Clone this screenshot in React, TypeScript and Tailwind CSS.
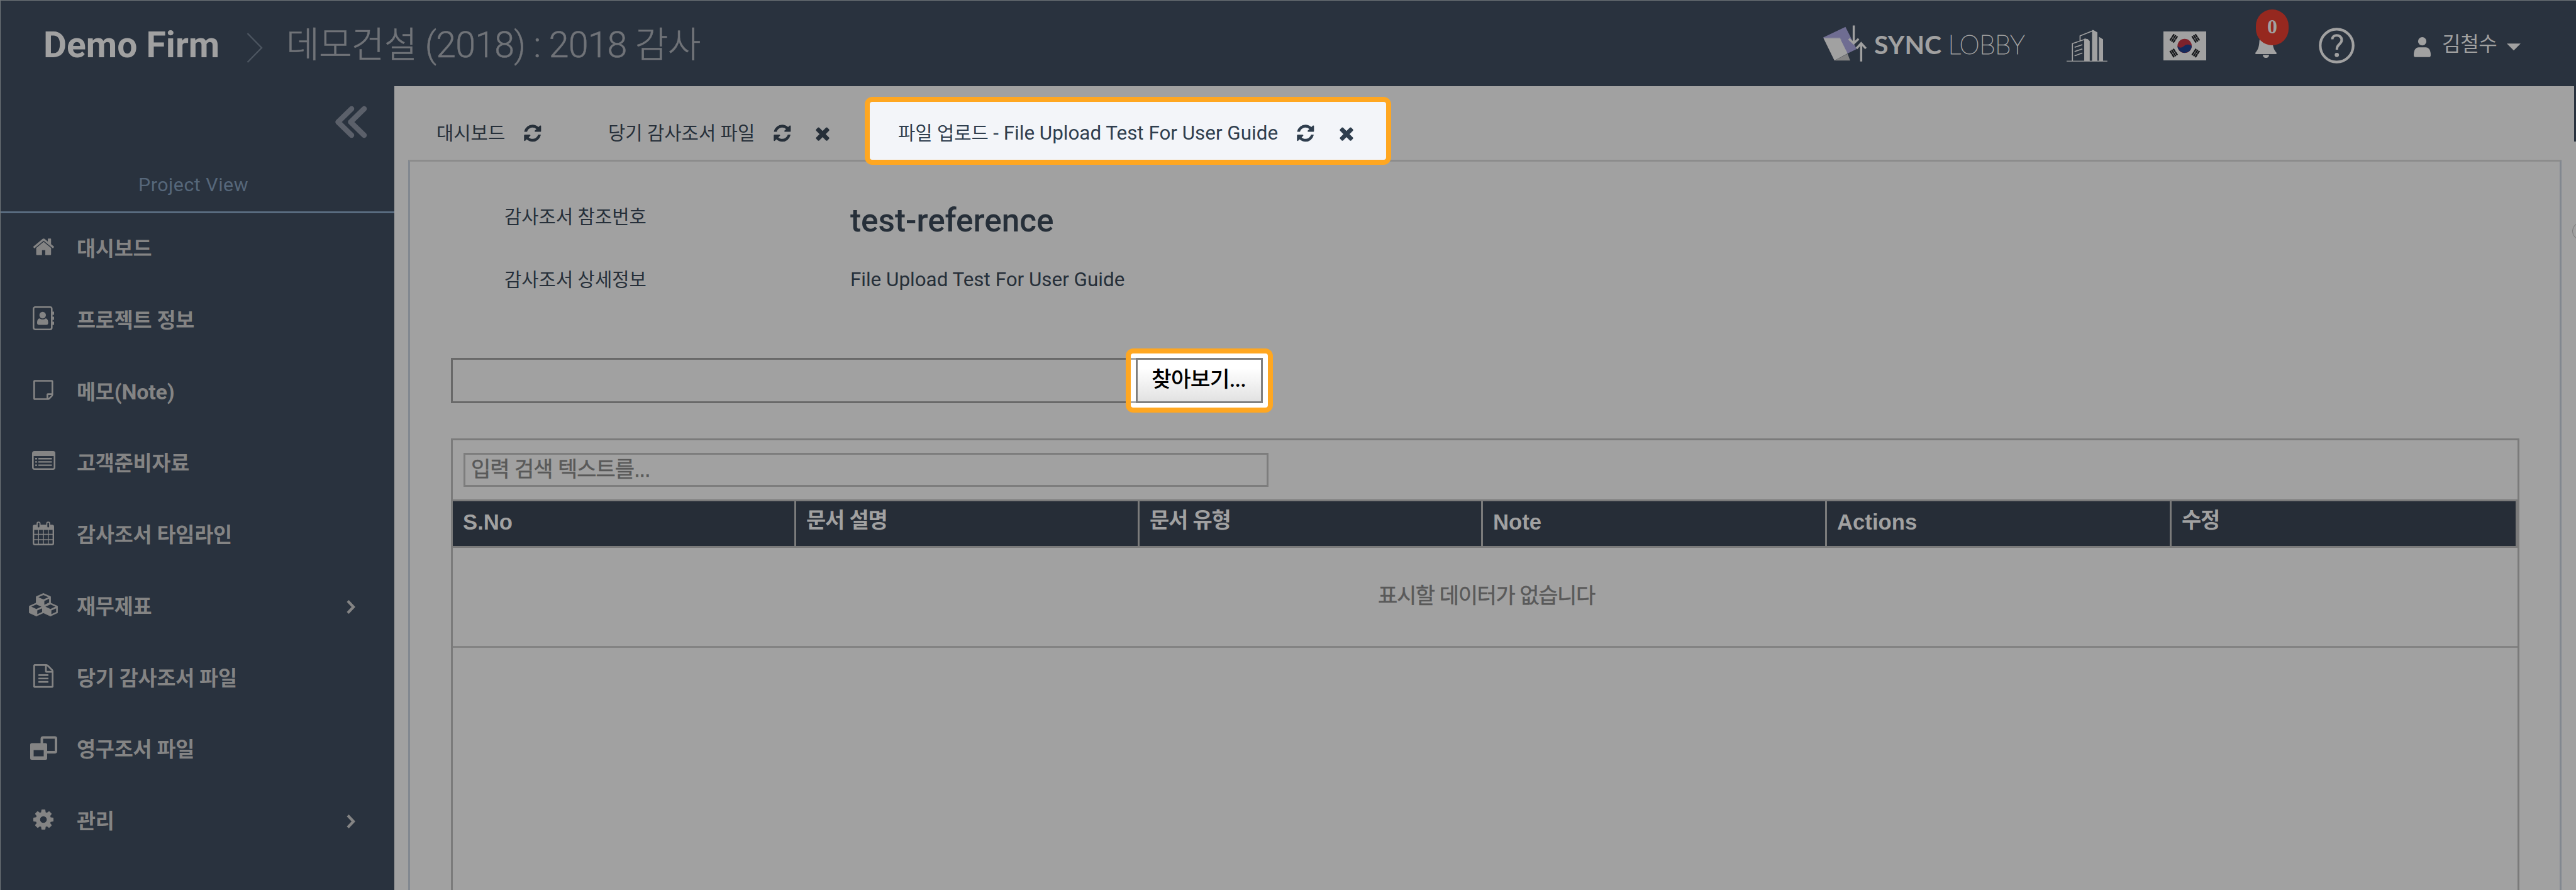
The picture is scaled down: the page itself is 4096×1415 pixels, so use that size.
import type { ReactNode } from "react";

type IconProps = { className?: string };

const REFRESH =
  "M1639 1056q0 5-1 7-64 268-268 434.5t-478 166.5q-146 0-282.5-55t-243.5-157l-129 129q-19 19-45 19t-45-19-19-45v-448q0-26 19-45t45-19h448q26 0 45 19t19 45-19 45l-137 137q71 66 161 102t187 36q134 0 250-65t186-179q11-17 53-117 8-23 30-23h192q13 0 22.5 9.5t9.5 22.5zm25-800v448q0 26-19 45t-45 19h-448q-26 0-45-19t-19-45 19-45l138-138q-148-137-349-137-134 0-250 65t-186 179q-11 17-53 117-8 23-30 23h-199q-13 0-22.5-9.5t-9.5-22.5v-7q65-268 270-434.5t480-166.5q146 0 284 55.5t245 156.5l130-129q19-19 45-19t45 19 19 45z";
const TIMES =
  "M1490 1322q0 40-28 68l-136 136q-28 28-68 28t-68-28l-294-294-294 294q-28 28-68 28t-68-28l-136-136q-28-28-28-68t28-68l294-294-294-294q-28-28-28-68t28-68l136-136q28-28 68-28t68 28l294 294 294-294q28-28 68-28t68 28l136 136q28 28 28 68t-28 68l-294 294 294 294q28 28 28 68z";

function RefreshIcon({ className = "" }: IconProps) {
  return (
    <svg viewBox="0 0 1792 1792" fill="currentColor" className={`size-[31.6px] shrink-0 ${className}`}>
      <path d={REFRESH} />
    </svg>
  );
}

function CloseIcon({ className = "" }: IconProps) {
  return (
    <svg viewBox="0 0 1792 1792" fill="currentColor" className={`size-[32px] shrink-0 ${className}`}>
      <path d={TIMES} />
    </svg>
  );
}

function HomeIcon() {
  return (
    <svg viewBox="0 0 1792 1792" fill="currentColor" className="size-[36.8px]">
      <path d="M1472 992v480q0 26-19 45t-45 19h-384v-384h-256v384h-384q-26 0-45-19t-19-45v-480q0-1 .5-3t.5-3l575-474 575 474q1 2 1 6zm223-69l-62 74q-8 9-21 11h-3q-13 0-21-7l-692-577-692 577q-12 8-24 7-13-2-21-11l-62-74q-8-10-7-23.5t11-21.5l719-599q32-26 76-26t76 26l244 204v-195q0-14 9-23t23-9h192q14 0 23 9t9 23v408l219 182q10 8 11 21.5t-7 23.5z" />
    </svg>
  );
}

function AddressBookIcon() {
  return (
    <svg viewBox="0 0 34 38" className="h-[38px] w-[34px]">
      <rect x="1.3" y="1.3" width="29" height="35.4" rx="2.6" fill="none" stroke="currentColor" strokeWidth="2.6" />
      <path d="M31 8.5h3v5h-3zM31 16.5h3v5h-3zM31 24.5h3v5h-3z" fill="currentColor" />
      <circle cx="15.8" cy="14" r="5.2" fill="currentColor" />
      <path d="M7 26.4c0-4 1.2-7.2 4.2-7.2 1.2 1 2.8 1.6 4.6 1.6s3.4-.6 4.6-1.6c3 0 4.2 3.2 4.2 7.2 0 1.9-1.1 3-2.9 3H9.9c-1.8 0-2.9-1.1-2.9-3z" fill="currentColor" />
    </svg>
  );
}

function StickyNoteIcon() {
  return (
    <svg viewBox="0 128 1536 1536" fill="currentColor" className="h-[32px] w-[31.6px]">
      <path d="M1400 1280h-248v248q29-10 41-22l185-185q12-12 22-41zm-280-128h288v-896h-1280v1280h896v-288q0-40 28-68t68-28zm416-928v1024q0 40-20 88t-48 76l-184 184q-28 28-76 48t-88 20h-1024q-40 0-68-28t-28-68v-1344q0-40 28-68t68-28h1344q40 0 68 28t28 68z" />
    </svg>
  );
}

function ListIcon() {
  return (
    <svg viewBox="0 0 37 30" className="-mt-[3px] h-[30px] w-[37px]">
      <rect x="1.3" y="1.3" width="34.4" height="27.4" rx="2.4" fill="none" stroke="currentColor" strokeWidth="2.6" />
      <path d="M1.3 2h34.4v6H1.3zM5 11h3v2.4H5zM5 16.2h3v2.4H5zM5 21.4h3v2.4H5zM10 11h21.5v2.4H10zM10 16.2h21.5v2.4H10zM10 21.4h21.5v2.4H10z" fill="currentColor" />
    </svg>
  );
}

function CalendarIcon() {
  return (
    <svg viewBox="0 0 34 38" className="h-[38px] w-[34px]">
      <rect x="1.2" y="6.5" width="31.6" height="30.3" rx="2" fill="none" stroke="currentColor" strokeWidth="2.4" />
      <path d="M1.2 6h31.6v7.5H1.2z" fill="currentColor" />
      <path d="M9.3 13v24M17 13v24M24.7 13v24M1 20.5h32M1 29h32" stroke="currentColor" strokeWidth="1.4" />
      <rect x="7" y="1.2" width="4.6" height="9.3" rx="2.3" fill="#29323e" stroke="currentColor" strokeWidth="1.8" />
      <rect x="22.4" y="1.2" width="4.6" height="9.3" rx="2.3" fill="#29323e" stroke="currentColor" strokeWidth="1.8" />
    </svg>
  );
}

function Cube({ x, y }: { x: number; y: number }) {
  return (
    <g transform={`translate(${x} ${y})`}>
      <path d="M0 5.2 11.5 0 23 5.2V15.6L11.5 21 0 15.6z" fill="currentColor" stroke="currentColor" strokeWidth="0.8" strokeLinejoin="round" />
      <path d="M11.5 2.5 19.5 6 11.5 9.6 3.5 6z" fill="#29323e" />
      <path d="M13 12 20.6 8.6V14.5L13 18z" fill="#29323e" />
    </g>
  );
}

function CubesIcon() {
  return (
    <svg viewBox="0 0 46 37" className="h-[37px] w-[46px]">
      <Cube x={11.5} y={0.4} />
      <Cube x={0.3} y={15.6} />
      <Cube x={22.7} y={15.6} />
    </svg>
  );
}

function FileIcon() {
  return (
    <svg viewBox="128 0 1536 1792" fill="currentColor" className="h-[37.5px] w-[32px]">
      <path d="M1596 380q28 28 48 76t20 88v1152q0 40-28 68t-68 28h-1344q-40 0-68-28t-28-68v-1600q0-40 28-68t68-28h896q40 0 88 20t76 48zm-444-244v376h376q-10-29-22-41l-313-313q-12-12-41-22zm384 1528v-1024h-416q-40 0-68-28t-28-68v-416h-768v1536h1280zm-1024-864q0-14 9-23t23-9h704q14 0 23 9t9 23v64q0 14-9 23t-23 9h-704q-14 0-23-9t-9-23v-64zm736 224q14 0 23 9t9 23v64q0 14-9 23t-23 9h-704q-14 0-23-9t-9-23v-64q0-14 9-23t23-9h704zm0 256q14 0 23 9t9 23v64q0 14-9 23t-23 9h-704q-14 0-23-9t-9-23v-64q0-14 9-23t23-9h704z" />
    </svg>
  );
}

function RestoreIcon() {
  return (
    <svg viewBox="0 0 43 38" className="h-[38px] w-[43px]">
      <path d="M18.5 12V4.5a2 2 0 0 1 2-2H39a2 2 0 0 1 2 2V24a2 2 0 0 1-2 2H27" fill="none" stroke="currentColor" strokeWidth="4" />
      <path d="M2.5 11.5h22a2.5 2.5 0 0 1 2.5 2.5v21.5a2.5 2.5 0 0 1-2.5 2.5h-22A2.5 2.5 0 0 1 0 35.5V14a2.5 2.5 0 0 1 2.5-2.5zM5.5 22.5V32.5H21.5V22.5z" fill="currentColor" fillRule="evenodd" />
    </svg>
  );
}

function GearIcon() {
  return (
    <svg viewBox="128 128 1536 1536" fill="currentColor" className="size-[32px]">
      <path d="M1152 896q0-106-75-181t-181-75-181 75-75 181 75 181 181 75 181-75 75-181zm512-109v222q0 12-8 23t-20 13l-185 28q-19 54-39 91 35 50 107 138 10 12 10 25t-9 23q-27 37-99 108t-94 71q-12 0-26-9l-138-108q-44 23-91 38-16 136-29 186-7 28-36 28h-222q-14 0-24.5-8.5t-11.5-21.5l-28-184q-49-16-90-37l-141 107q-10 9-25 9-14 0-25-11-126-114-165-168-7-10-7-23 0-12 8-23 15-21 51-66.5t54-70.5q-27-50-41-99l-183-27q-13-2-21-12.5t-8-23.5v-222q0-12 8-23t19-13l186-28q14-46 39-92-40-57-107-138-10-12-10-24 0-10 9-23 26-36 98.5-107.5t94.5-71.5q13 0 26 10l138 107q44-23 91-38 16-136 29-186 7-28 36-28h222q14 0 24.5 8.5t11.5 21.5l28 184q49 16 90 37l142-107q9-9 24-9 13 0 25 10 129 119 165 170 7 8 7 22 0 12-8 23-15 21-51 66.5t-54 70.5q26 50 41 98l183 28q13 2 21 12.5t8 23.5z" />
    </svg>
  );
}

function LogoMark() {
  return (
    <svg viewBox="50 50 310 262" className="h-[59.6px] w-[70.5px] shrink-0">
      <path d="M55 140 210 66 288 222 225 252z" fill="#6f6d92" />
      <path d="M55 140 172 140 185 160 60 150z" fill="#7f7d95" />
      <path d="M57 147H172L225 252 133 302z" fill="#a1a1a1" />
      <path d="M133 302 225 254 243 302z" fill="#838383" />
      <g fill="none" stroke="#a1a1a1" strokeWidth="15">
        <path d="M268 57V180M234 150 268 182 302 150" />
        <path d="M320 308V184M287 217 320 181 353 217" />
      </g>
    </svg>
  );
}

function BuildingsIcon() {
  return (
    <svg viewBox="39 172 267 228" preserveAspectRatio="none" className="h-[51.9px] w-[65.1px]">
      <path d="M39 389H305V398H39z" fill="#8b8d90" />
      <path d="M154 236 176 238 190 252V392H154zM205 175H214L240 192V392H205zM250 222 277 240V392H250z" fill="#a1a1a1" />
      <path d="M77 392V270L165 238M127 250V216L212 180M91 296 142 277M91 326 142 307M91 355 142 336" fill="none" stroke="#a1a1a1" strokeWidth="7" />
    </svg>
  );
}

function Trigram({ x, y, angle }: { x: number; y: number; angle: number }) {
  return (
    <g transform={`translate(${x} ${y}) rotate(${angle})`} fill="#15171a">
      <path d="M-6-4.3H6V-1.9H-6zM-6-1.2H6V1.2H-6zM-6 1.9H6V4.3H-6z" />
      <path d="M-.3-4.3H.3V4.3H-.3z" fill="#77797b" />
    </g>
  );
}

function KoreanFlag() {
  return (
    <svg viewBox="0 0 68 46" className="h-[46px] w-[68px]">
      <path d="M0 0H68V46H0z" fill="#a1a1a1" />
      <circle cx="33.7" cy="23" r="11.3" fill="#7e222c" />
      <path d="M22.4 22.5c1 3.6 6.6 4.6 10.3 0.8 3.6-4.2 10.3-2.6 12.3-0.3a11.3 11.3 0 0 1-22.6-.5z" fill="#152a5c" />
      <Trigram x={16.3} y={11} angle={-57} />
      <Trigram x={51.3} y={11} angle={57} />
      <Trigram x={16.3} y={34.3} angle={57} />
      <Trigram x={51.3} y={34.3} angle={-57} />
    </svg>
  );
}

function NavChevron() {
  return (
    <svg viewBox="0 0 14 24" className="h-[24px] w-[14px]" fill="none" stroke="currentColor" strokeWidth="4.4">
      <path d="M2 2.5 11 12 2 21.5" />
    </svg>
  );
}

const navItems: { label: ReactNode; icon: ReactNode; expandable?: boolean }[] = [
  { label: "대시보드", icon: <HomeIcon /> },
  { label: "프로젝트 정보", icon: <AddressBookIcon /> },
  {
    label: (
      <>
        메모<span className="text-[34px]">(Note)</span>
      </>
    ),
    icon: <StickyNoteIcon />,
  },
  { label: "고객준비자료", icon: <ListIcon /> },
  { label: "감사조서 타임라인", icon: <CalendarIcon /> },
  { label: "재무제표", icon: <CubesIcon />, expandable: true },
  { label: "당기 감사조서 파일", icon: <FileIcon /> },
  { label: "영구조서 파일", icon: <RestoreIcon /> },
  { label: "관리", icon: <GearIcon />, expandable: true },
];

const columns = ["S.No", "문서 설명", "문서 유형", "Note", "Actions", "수정"];

function Header() {
  return (
    <header className="flex h-[136px] shrink-0 items-center whitespace-nowrap text-[#a1a1a1]">
      <div className="mt-[5px] ml-[68px] w-[323px] text-[57px] leading-[70px] font-bold">Demo Firm</div>
      <svg viewBox="0 0 26 48" className="mt-[13px] h-[48px] w-[26px]" fill="none" stroke="#4c5560" strokeWidth="2.4">
        <path d="M1.5 1 24 24 1.5 47" />
      </svg>
      <div className="mt-[5px] ml-[37px] text-[57.3px] leading-[70px] font-light tracking-[-0.8px] text-[#707378] [-webkit-text-stroke:0.5px_#707378]">
        데모건설 (2018) : 2018 감사
      </div>

      <div className="ml-auto flex h-full items-center">
        <LogoMark />
        <div className="mt-[3px] ml-[12px] w-[306px] font-['Lato'] text-[41px] leading-[50px]">
          <span className="font-bold">SYNC</span>{" "}
          <span className="font-thin tracking-[-0.5px] [-webkit-text-stroke:0.9px_#a1a1a1]">LOBBY</span>
        </div>
        <div className="w-[154px] pt-[7px]">
          <BuildingsIcon />
        </div>
        <div className="w-[146px] pt-[7px]">
          <KoreanFlag />
        </div>
        <div className="relative h-full w-[101px]">
          <svg viewBox="0 0 34 38" className="absolute top-[53px] left-0 h-[38px] w-[34px]" fill="currentColor">
            <path d="M17 0c6 1 10 5 10.5 12 .4 8 2 13 6 17.5.9 1.3.2 2.5-1 2.5H1.5C.3 32-.4 30.8.5 29.5 4.5 25 6.1 20 6.5 12 7 5 11 1 17 0zM12 33.2h10a5 5 0 0 1-10 0z" />
          </svg>
          <div className="absolute top-[14px] left-px flex h-[57px] w-[52px] items-center justify-center rounded-full bg-[#96281f] pb-[3px] font-['Liberation_Serif'] text-[32px] leading-none font-bold">
            0
          </div>
        </div>
        <svg viewBox="0 0 57 57" className="mt-[7px] h-[57px] w-[57px]" fill="none" stroke="currentColor">
          <circle cx="28.5" cy="28.5" r="26.2" strokeWidth="4.2" />
          <path d="M21.5 18.5c0-4 3-6.3 7-6.3s8 2.6 8 7.3c0 6.5-7.7 7-7.7 14v1.5" strokeWidth="4" />
          <circle cx="28.7" cy="43.3" r="3.4" fill="currentColor" stroke="none" />
        </svg>
        <svg viewBox="0 0 27 32" className="mt-[12px] ml-[94px] h-[32px] w-[27px]" fill="currentColor">
          <circle cx="13.5" cy="6.7" r="6.6" />
          <path d="M0 28.5c0-7.5 3-12.3 8-12.3h11c5 0 8 4.8 8 12.3 0 2.5-1 3.3-3 3.3H3c-2 0-3-.8-3-3.3z" />
        </svg>
        <div className="mt-[2px] ml-[18px] w-[103px] text-[32px] leading-[44px] tracking-[-0.3px]">김철수</div>
        <svg viewBox="0 0 22 11" className="mt-[12px] mr-[88px] h-[11.5px] w-[22px]" fill="currentColor">
          <path d="M0 0H22L11 11z" />
        </svg>
      </div>
    </header>
  );
}

function Sidebar() {
  return (
    <aside className="w-[626px] shrink-0 bg-[#29323e] whitespace-nowrap">
      <div className="flex h-[202px] flex-col border-b-[3px] border-[#596c80]">
        <svg viewBox="0 0 52 52" className="mt-[31px] ml-[530px] h-[52px] w-[54px] shrink-0" fill="none" stroke="#5b606a" strokeWidth="8.5" strokeLinecap="round" strokeLinejoin="round">
          <path d="M27 5 5.5 26 27 47M47 5 25.5 26 47 47" />
        </svg>
        <div className="mt-[52px] pl-[219px] text-[30.4px] leading-[44px] tracking-[0.5px] text-[#56677a]">Project View</div>
      </div>
      <nav className="flex flex-col text-[32.7px] font-bold tracking-[-0.2px] text-[#848484]">
        {navItems.map((item, index) => (
          <div key={index} className="flex h-[113.8px] items-center">
            <div className="-mt-[7px] ml-[38px] flex w-[60px] justify-center">{item.icon}</div>
            <div className="ml-[23px] leading-[44px]">{item.label}</div>
            {item.expandable && (
              <div className="mr-[62px] ml-auto">
                <NavChevron />
              </div>
            )}
          </div>
        ))}
      </nav>
    </aside>
  );
}

function Tabs() {
  return (
    <div className="flex h-[117px] items-start text-[29.7px] leading-[44px] whitespace-nowrap text-[#262f39]">
      <div className="mt-[17px] flex h-[108px] w-[273px] items-center pt-[7px] pl-[45px]">
        <span className="w-[137px]">대시보드</span>
        <RefreshIcon />
      </div>
      <div className="mt-[17px] flex h-[108px] w-[453px] items-center pt-[7px] pl-[45px]">
        <span className="w-[261px]">당기 감사조서 파일</span>
        <RefreshIcon />
        <CloseIcon className="ml-[32px]" />
      </div>
      <div className="relative mt-[17px] flex h-[108px] w-[837px] items-center rounded-[12px] border-[8.5px] border-[#ffa721] bg-[#f3f5f9] pt-[7px] pl-[45px] text-[#2f3e4e]">
        <span className="w-[632px]">
          파일 업로드 <span className="text-[31.4px]">- File Upload Test For User Guide</span>
        </span>
        <RefreshIcon />
        <CloseIcon className="ml-[33px]" />
      </div>
    </div>
  );
}

function Details() {
  return (
    <div className="grid grid-cols-[550px_1fr] grid-rows-[100px_100px] pt-[38px] pl-[150px] text-[29.7px] leading-[44px] whitespace-nowrap text-[#262f39]">
      <div className="flex items-center">감사조서 참조번호</div>
      <div className="flex items-center pt-[12px] text-[51.3px] leading-[60px] font-medium">test-reference</div>
      <div className="flex items-center">감사조서 상세정보</div>
      <div className="flex items-center text-[31.4px]">File Upload Test For User Guide</div>
    </div>
  );
}

function FilePicker() {
  return (
    <div className="mt-[74px] ml-[65px] flex h-[72px] w-[1292px]">
      <div className="h-full w-[1090px] shrink-0 border-[3px] border-[#696969]" />
      <div className="relative w-0">
        <div className="absolute -top-[15px] -left-[17px] flex h-[102px] w-[234px] flex-col rounded-[12px] border-[8px] border-[#ffa721] bg-white pt-[7px]">
          <div className="flex h-[72px]">
            <div className="w-[8px] border-y-[3px] border-[#a6a6a6]" />
            <button className="flex h-[72px] w-[202px] items-center justify-center border-[3px] border-[#7f7f7f] bg-linear-to-b from-white from-20% to-[#e2e2e2] pr-[2px] pb-[4px] text-[34.5px] leading-[44px] font-medium tracking-[-0.8px] whitespace-nowrap text-black">
              찾아보기...
            </button>
          </div>
        </div>
      </div>
    </div>
  );
}

function DocumentTable() {
  return (
    <div className="mt-[56px] ml-[65px] h-[760px] w-[3289px] border-[3px] border-[#7b7b7b] font-['Liberation_Sans','Noto_Sans_CJK_KR',sans-serif] whitespace-nowrap">
      <div className="h-[94px] pt-[20px] pl-[17px]">
        <div className="flex h-[54px] w-[1280px] items-center border-[3px] border-[#7d7d7d] pb-[3px] pl-[9px] text-[34px] leading-[44px] tracking-[-1px] text-[#595959] [-webkit-text-stroke:0.5px_#595959]">
          입력 검색 텍스트를...
        </div>
      </div>
      <div className="grid h-[77px] grid-cols-[546px_546px_546px_547px_548px_1fr] border-y-[3px] border-[#7b7b7b] bg-[#262d37] text-[34.7px] leading-[44px] font-bold text-[#a1a1a1]">
        {columns.map((column) => (
          <div key={column} className="border-r-[3px] border-[#7b7b7b] pt-[11px] pl-[16px]">
            {/[가-힣]/.test(column) ? <div className="-mt-[3px] text-[34px] tracking-[-1.2px]">{column}</div> : column}
          </div>
        ))}
      </div>
      <div className="flex h-[159px] items-center justify-center border-b-[3px] border-[#838383] pb-[4px] pl-[4px] text-[34px] leading-[44px] tracking-[-1.4px] text-[#595959] [-webkit-text-stroke:0.5px_#595959]">
        표시할 데이터가 없습니다
      </div>
    </div>
  );
}

export default function App() {
  return (
    <div className="flex h-[1415px] w-[4096px] flex-col overflow-hidden border-t border-l border-[#6f7578] bg-[#29323e] font-['Roboto','Noto_Sans_CJK_KR',sans-serif]">
      <Header />
      <div className="flex min-h-0 flex-1">
        <Sidebar />
        <main className="relative min-w-0 flex-1 overflow-hidden bg-[#a1a1a1] pr-[23px] pl-[22px]">
          <Tabs />
          <section className="h-[1300px] border-x-[3px] border-t-[3px] border-x-[#828890] border-t-[#8c8c8c]">
            <Details />
            <FilePicker />
            <DocumentTable />
          </section>
          <div className="absolute top-0 right-0 h-[88px] w-[3px] bg-[#29323e]" />
          <div className="absolute top-[216px] -right-[23px] size-[29px] rounded-full border border-[#777777]" />
        </main>
      </div>
    </div>
  );
}
